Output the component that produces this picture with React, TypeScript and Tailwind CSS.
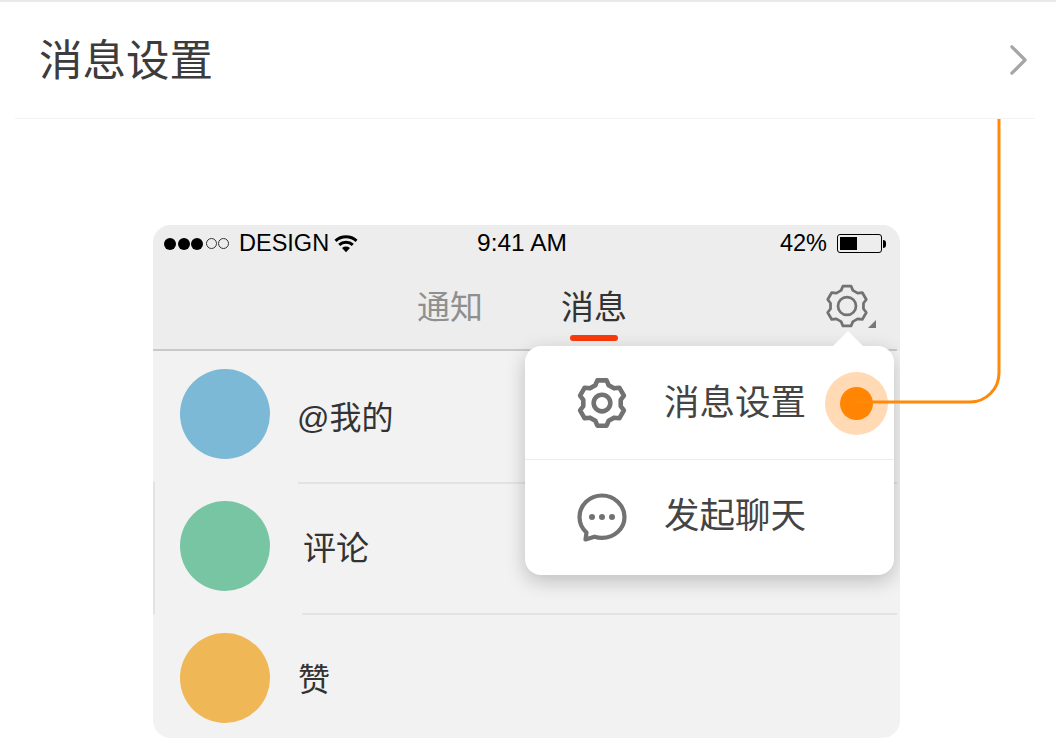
const FONT = "font-['Liberation_Sans','Noto_Sans_CJK_SC',sans-serif]"

// six-tooth gear outline, one tooth pointing straight up
function gearPoints(cx: number, cy: number, outer: number, inner: number) {
  const pts: string[] = []
  for (let i = 0; i < 6; i++) {
    const a = (i * Math.PI) / 3 - Math.PI / 2
    const offsets: [number, number][] = [
      [-0.36, inner],
      [-0.2, outer],
      [0.2, outer],
      [0.36, inner],
    ]
    for (const [d, r] of offsets) {
      pts.push(`${(cx + r * Math.cos(a + d)).toFixed(2)},${(cy + r * Math.sin(a + d)).toFixed(2)}`)
    }
  }
  return pts.join(" ")
}

function Gear({ className, stroke, hole }: { className: string; stroke: number; hole: number }) {
  return (
    <svg viewBox="0 0 48 48" className={className} fill="none" stroke="#727272" strokeWidth={stroke} strokeLinejoin="round">
      <polygon points={gearPoints(24, 24, 22.2, 18.2)} />
      <circle cx="24" cy="24" r={hole} />
    </svg>
  )
}

function StatusBar() {
  return (
    <div className="flex h-[36px] items-center justify-between pl-[11px] pr-[14px] pt-[1px] text-[23.5px] leading-none text-black">
      <div className="flex w-[290px] items-center">
        <div className="flex items-center gap-[1.5px]">
          <span className="h-3 w-3 rounded-full bg-black" />
          <span className="h-3 w-3 rounded-full bg-black" />
          <span className="h-3 w-3 rounded-full bg-black" />
          <span className="ml-[1px] h-[11px] w-[11px] rounded-full border border-[#333]" />
          <span className="h-[11px] w-[11px] rounded-full border border-[#333]" />
        </div>
        <span className="ml-[10px]">DESIGN</span>
        <svg viewBox="0 0 24 18" className="ml-[5px] h-[19px] w-[24px]" fill="none" stroke="#000" strokeWidth="3">
          <path d="M1.5 6.4C7.4 1 16.6 1 22.5 6.4" />
          <path d="M5.2 10.4C9 7 15 7 18.8 10.4" />
          <path d="M12 17.8 8 13.4C10.4 11.6 13.6 11.6 16 13.4Z" fill="#000" stroke="none" />
        </svg>
      </div>
      <span className="ml-[-6px] text-[24.5px]">9:41 AM</span>
      <div className="flex w-[290px] items-center justify-end">
        <span>42%</span>
        <div className="ml-[10px] flex h-[19px] w-[45px] rounded-[3px] border border-black p-[2px]">
          <div className="w-[17px] bg-black" />
        </div>
        <span className="ml-[1px] h-[8px] w-[3px] rounded-r-full bg-black" />
      </div>
    </div>
  )
}

function Tabs() {
  return (
    <div className="flex h-[88px]">
      <div className="ml-[264px] mt-[24px] text-[33px] leading-[46px] text-[#8f8f8f]">通知</div>
      <div className="ml-[78px] mt-[24px] flex flex-col items-center text-[33px] leading-[46px] text-[#333]">
        消息
        <span className="mt-[4px] h-[6px] w-[48px] rounded-full bg-[#f93a0c]" />
      </div>
      <Gear className="ml-[198px] mt-[23px] h-[44px] w-[44px]" stroke={3} hole={9.8} />
      <span className="ml-[-1px] mt-[59px] h-0 w-0 border-b-[8px] border-l-[8px] border-b-[#777] border-l-transparent" />
    </div>
  )
}

function Row({ color, label, textClass, lineClass }: { color: string; label: string; textClass: string; lineClass?: string }) {
  return (
    <div className="relative h-[132px] pl-[27px] pt-[19px]">
      <div className="flex items-center">
        <span className="h-[90px] w-[90px] shrink-0 rounded-full" style={{ backgroundColor: color }} />
        <span className={textClass}>{label}</span>
      </div>
      {lineClass && <div className={lineClass} />}
    </div>
  )
}

// sits inside the phone frame so its shadow gets clipped at the frame edge
function Popup() {
  return (
    <div className="absolute left-[372px] top-[121px] h-[229px] w-[369px] rounded-[16px] bg-white text-[35.5px] leading-none text-[#444] shadow-[0_6px_20px_rgba(0,0,0,0.22)]">
      <span className="absolute left-[308px] top-[-15px] h-0 w-0 border-x-[15px] border-b-[15px] border-x-transparent border-b-white" />
      <div className="flex h-[114px] items-center border-b border-[#ececec] pl-[52px]">
        <Gear className="h-[50px] w-[50px]" stroke={4.4} hole={8} />
        <span className="ml-[37px] mt-[2px]">消息设置</span>
      </div>
      <div className="flex h-[115px] items-center pl-[52px]">
        <svg viewBox="0 0 50 50" className="h-[50px] w-[50px]" fill="none" stroke="#727272" strokeWidth="4.2" strokeLinejoin="round">
          <path d="M25 2.5C12.5 2.5 2.5 12 2.5 24c0 6.2 2.6 11.6 7 15.6l-1 6.9 9-2.8c2.4.8 5 1.2 7.5 1.2 12.5 0 22.5-9.3 22.5-20.9S37.5 2.5 25 2.5Z" />
          <circle cx="15" cy="24" r="3" fill="#727272" stroke="none" />
          <circle cx="25" cy="24" r="3" fill="#727272" stroke="none" />
          <circle cx="35" cy="24" r="3" fill="#727272" stroke="none" />
        </svg>
        <span className="ml-[37px] mt-[-2px]">发起聊天</span>
      </div>
    </div>
  )
}

// orange callout from the menu item up to the list row above
function Callout() {
  return (
    <>
      <span className="absolute left-[825px] top-[372px] flex h-[63px] w-[63px] items-center justify-center rounded-full bg-[#ffdab5]">
        <span className="h-[33px] w-[33px] rounded-full bg-[#ff8503]" />
      </span>
      <svg className="absolute left-[850px] top-[118px]" width="160" height="295" fill="none" stroke="#ff8a0a" strokeWidth="3">
        <path d="M6 284H120C136 284 149 271 149 255V1" />
      </svg>
    </>
  )
}

export default function App() {
  return (
    <div className={`relative h-[738px] w-[1056px] overflow-hidden bg-white ${FONT}`}>
      <div className="border-t-2 border-[#e9e9e9]">
        <div className="ml-[15px] mr-[21px] flex h-[117px] items-center justify-between border-b border-[#f3f3f3] pl-[24px] pr-[8px]">
          <span className="mt-[3px] text-[43.5px] leading-none text-[#3c3c3c]">消息设置</span>
          <svg viewBox="0 0 18 32" className="h-[32px] w-[17px]" fill="none" stroke="#a6a6a6" strokeWidth="3.4" strokeLinecap="round" strokeLinejoin="round">
            <path d="M2 2l14 14L2 30" />
          </svg>
        </div>
      </div>

      <div className="relative ml-[153px] mt-[106px] h-[513px] w-[747px] overflow-hidden rounded-[18px] bg-[#f2f2f2]">
        <div className="bg-[#ededed]">
          <StatusBar />
          <Tabs />
          <div className="mr-[3px] h-[2px] bg-[#c9c9c9]" />
        </div>
        <div className="mt-[-1px]">
          <Row color="#7cb9d6" label="@我的" textClass="ml-[27px] mt-[8px] text-[32px] leading-none text-[#333]" lineClass="absolute bottom-[-2px] left-[145px] right-[3px] h-[2px] bg-[#e3e3e3]" />
          <div className="border-l-2 border-[#e3e3e3]">
            <div className="ml-[-2px]">
              <Row color="#78c5a4" label="评论" textClass="ml-[33px] mt-[4px] text-[33px] leading-none text-[#333]" lineClass="absolute bottom-[-1px] left-[149px] right-[3px] h-[2px] bg-[#e3e3e3]" />
            </div>
          </div>
          <Row color="#efb755" label="赞" textClass="ml-[28px] mt-[4px] text-[32px] leading-none text-[#333]" />
        </div>
        <Popup />
      </div>

      <Callout />
    </div>
  )
}
